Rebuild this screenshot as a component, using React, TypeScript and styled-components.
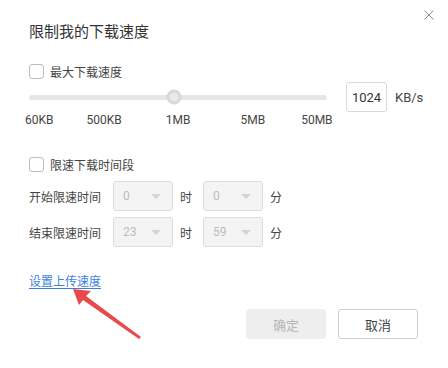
import React, { useState } from 'react'
import styled, { createGlobalStyle } from 'styled-components'

const Global = createGlobalStyle`
    html, body {
        margin: 0;
        padding: 0;
        background: #fff;
    }
    body {
        font-family: Roboto, "Noto Sans CJK SC", sans-serif;
        color: #333;
    }
`

const Dialog = styled.div`
    position: relative;
    width: 448px;
    height: 368px;
    box-sizing: border-box;
    padding: 21px 30px 0 29px;
    background: #fff;
`

const Header = styled.div`
    display: flex;
    justify-content: space-between;
    align-items: flex-start;
    > h1{
        margin: 0;
        font-size: 15px;
        line-height: 20px;
        font-weight: 400;
        color: #333;
        font-family: "Noto Sans CJK SC", sans-serif;
    }
`

const Close = styled.button`
    border: none;
    background: none;
    padding: 0;
    margin: -11px -16px 0 0;
    width: 10px;
    height: 10px;
    cursor: pointer;
    > svg{ display: block; }
`

const CheckRow = styled.label<{ $top: number }>`
    display: flex;
    align-items: center;
    gap: 6px;
    height: 20px;
    margin-top: ${p => p.$top}px;
    font-size: 12px;
    color: #444;
    font-family: "Noto Sans CJK SC", sans-serif;
`

const Box = styled.span<{ $on: boolean }>`
    width: 13px;
    height: 13px;
    border: 1px solid #bdbdbd;
    border-radius: 3px;
    background: ${p => p.$on ? '#3b82e0' : '#fff'};
`

const SliderRow = styled.div`
    display: flex;
    align-items: center;
    height: 30px;
    margin-top: 1px;
`

const Track = styled.div`
    position: relative;
    flex-shrink: 0;
    width: 298px;
    height: 5px;
    border-radius: 3px;
    background: #e6e6e6;
    > .thumb{
        position: absolute;
        top: 50%;
        width: 9px;
        height: 9px;
        border: 3px solid #d8d8d8;
        background: #e9e9e9;
        border-radius: 50%;
        transform: translate(-50%, -50%);
    }
`

const Amount = styled.input`
    box-sizing: border-box;
    flex-shrink: 0;
    width: 41px;
    height: 30px;
    margin-left: 19px;
    border: 1px solid #d9d9d9;
    border-radius: 3px;
    font-size: 13px;
    font-family: Roboto, sans-serif;
    color: #333;
    text-align: center;
    padding: 0;
    outline: none;
`

const Unit = styled.span`
    margin-left: 8px;
    font-size: 13px;
    color: #444;
`

const Scale = styled.div`
    display: flex;
    height: 16px;
    margin-left: -4px;
`

const Mark = styled.span<{ $gap: number }>`
    margin-left: ${p => p.$gap}px;
    font-size: 12px;
    line-height: 16px;
    color: #444;
`

const TimeRow = styled.div<{ $top: number }>`
    display: flex;
    align-items: center;
    height: 30px;
    margin-top: ${p => p.$top}px;
    font-size: 12px;
    color: #444;
    font-family: "Noto Sans CJK SC", sans-serif;
    > .name{ width: 84px; }
    > .unit{ width: 30px; padding-left: 7px; box-sizing: border-box; }
`

const Select = styled.div`
    box-sizing: border-box;
    display: flex;
    align-items: center;
    justify-content: space-between;
    width: 60px;
    height: 30px;
    padding: 0 11px 0 9px;
    border: 1px solid #dcdcdc;
    border-radius: 3px;
    background: #f4f4f4;
    color: #bcbcbc;
    font-family: Roboto, sans-serif;
    font-size: 12px;
    > i{
        width: 0;
        height: 0;
        border-left: 5px solid transparent;
        border-right: 5px solid transparent;
        border-top: 5px solid #d4d4d4;
    }
`

const Link = styled.a`
    display: block;
    width: max-content;
    margin-top: 24px;
    font-size: 12px;
    line-height: 20px;
    color: #3d7fe0;
    text-decoration: underline;
    text-underline-offset: 2px;
    font-family: "Noto Sans CJK SC", sans-serif;
    cursor: pointer;
`

const Footer = styled.div`
    display: flex;
    justify-content: flex-end;
    gap: 12px;
    margin-top: 18px;
`

const Button = styled.button<{ $primary?: boolean }>`
    width: 80px;
    height: 30px;
    border-radius: 3px;
    font-size: 13px;
    font-family: "Noto Sans CJK SC", sans-serif;
    border: 1px solid ${p => p.$primary ? '#eeeeee' : '#cfcfcf'};
    background: ${p => p.$primary ? '#eeeeee' : '#fff'};
    color: ${p => p.$primary ? '#b5b5b5' : '#444'};
`

const Arrow = styled.svg`
    position: absolute;
    left: 0;
    top: 0;
    pointer-events: none;
`

function TimeSelect(props: { name: string, hour: string, minute: string, top: number }) {
    return (<TimeRow $top={props.top}>
        <span className="name">{props.name}</span>
        <Select><span>{props.hour}</span><i /></Select>
        <span className="unit">时</span>
        <Select><span>{props.minute}</span><i /></Select>
        <span className="unit">分</span>
    </TimeRow>)
}

function App() {
    const [state, setState] = useState({ max: false, period: false })
    return (<Dialog>
        <Global />
        <Header>
            <h1>限制我的下载速度</h1>
            <Close>
                <svg width="10" height="10" viewBox="0 0 10 10">
                    <path d="M0.5 0.5 L9.5 9.5 M9.5 0.5 L0.5 9.5" stroke="#8a8a8a" strokeWidth="1" />
                </svg>
            </Close>
        </Header>
        <CheckRow $top={20} onClick={() => setState({ ...state, max: !state.max })}>
            <Box $on={state.max} />最大下载速度
        </CheckRow>
        <SliderRow>
            <Track><span className="thumb" style={{ left: `${(145 / 298) * 100}%` }} /></Track>
            <Amount defaultValue="1024" />
            <Unit>KB/s</Unit>
        </SliderRow>
        <Scale>
            <Mark $gap={0}>60KB</Mark>
            <Mark $gap={33}>500KB</Mark>
            <Mark $gap={44}>1MB</Mark>
            <Mark $gap={50}>5MB</Mark>
            <Mark $gap={36}>50MB</Mark>
        </Scale>
        <CheckRow $top={26} onClick={() => setState({ ...state, period: !state.period })}>
            <Box $on={state.period} />限速下载时间段
        </CheckRow>
        <TimeSelect name="开始限速时间" hour="0" minute="0" top={7} />
        <TimeSelect name="结束限速时间" hour="23" minute="59" top={6} />
        <Link>设置上传速度</Link>
        <Footer>
            <Button $primary>确定</Button>
            <Button>取消</Button>
        </Footer>
        <Arrow width="448" height="368" viewBox="0 0 448 368">
            <polygon points="73,289 91,291 86,296 141,337 139,339 83,300 79,305" fill="#e8494a" />
        </Arrow>
    </Dialog>)
}

export default App
